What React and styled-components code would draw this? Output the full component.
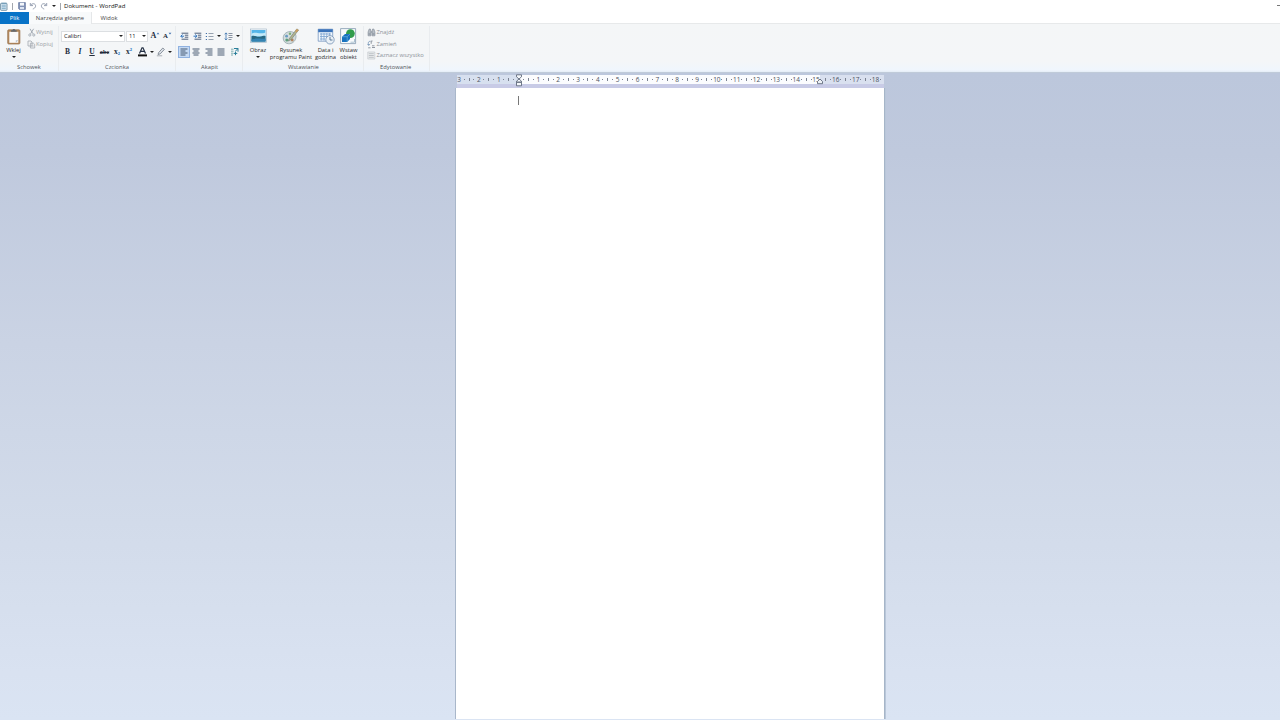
import React from "react";
import styled, { createGlobalStyle } from "styled-components";

const Global = createGlobalStyle`
  * { box-sizing: border-box; }
  body { margin: 0; overflow: hidden; background: #fff; }
`;

const Window = styled.div`
  width: 1280px;
  height: 720px;
  display: flex;
  flex-direction: column;
  overflow: hidden;
  font-family: "Open Sans", "Noto Sans", sans-serif;
  font-size: 5.8px;
  line-height: 7px;
  color: #2b2b2b;
  background: #fff;
`;

const TitleBar = styled.header`
  height: 12px;
  display: flex;
  align-items: center;
`;

const Slot = styled.span`
  width: ${(p) => p.$w}px;
  height: ${(p) => p.$h || 12}px;
  flex: none;
  display: flex;
  align-items: center;
  justify-content: center;
`;

const Text = styled.span`
  white-space: nowrap;
  font-size: ${(p) => p.$size || 5.8}px;
  letter-spacing: ${(p) => p.$track || 0}px;
  color: ${(p) => p.$color || "inherit"};
`;

const WindowTitle = styled(Text)`
  margin-left: 2px;
  color: #111;
`;

const Spacer = styled.span`
  flex: 1;
`;

const MinimizeMark = styled.i`
  width: 3px;
  height: 1px;
  margin-bottom: 1px;
  background: #777;
`;

const TabBar = styled.nav`
  height: 12px;
  display: flex;
  align-items: stretch;
  border-bottom: 1px solid #e7e9ea;
`;

const Tab = styled.div`
  width: ${(p) => p.$w}px;
  height: 12px;
  display: flex;
  align-items: center;
  justify-content: center;
  color: ${(p) => (p.$file ? "#fff" : "#444")};
  background: ${(p) => (p.$file ? "#0873c7" : p.$active ? "#f8fafb" : "transparent")};
  border-right: ${(p) => (p.$active ? "1px solid #e5e7e9" : "0")};
`;

const Ribbon = styled.section`
  height: 48px;
  display: flex;
  background: linear-gradient(#f4f6f7 0, #f4f6f8 38px, #f0f6fd 46px, #e4edf6 48px);
`;

const Group = styled.div`
  width: ${(p) => p.$w}px;
  height: 45px;
  margin-top: 2px;
  padding-left: ${(p) => p.$pad || 0}px;
  display: flex;
  flex-direction: column;
  border-right: 1px solid #e9ecef;
`;

const GroupBody = styled.div`
  height: 37.5px;
  display: flex;
`;

const GroupName = styled.div`
  height: 8px;
  padding-left: ${(p) => p.$x}px;
  display: flex;
  align-items: center;
  color: #505458;
`;

const Rows = styled.div`
  display: flex;
  flex-direction: column;
`;

const Row = styled.div`
  display: flex;
  align-items: center;
  height: ${(p) => p.$h}px;
`;

const BigButton = styled.div`
  width: ${(p) => p.$w}px;
  height: 37px;
  padding-top: 1.5px;
  display: flex;
  flex-direction: column;
  align-items: center;
  line-height: 7px;
`;

const BigIcon = styled.div`
  height: 19px;
  display: flex;
  align-items: flex-start;
`;

const BigLabel = styled(Text)`
  height: 7px;
`;

const Caret = styled.i`
  width: 0;
  height: 0;
  flex: none;
  margin: ${(p) => p.$m || "0"};
  border: 2px solid transparent;
  border-top: 2.4px solid #222;
  border-bottom: 0;
`;

const Combo = styled.div`
  width: ${(p) => p.$w}px;
  height: 11px;
  margin-right: 1px;
  padding: 0 1px 0 2px;
  display: flex;
  align-items: center;
  justify-content: space-between;
  background: #fff;
  border: 1px solid #dcdfe2;
  color: #222;
`;

const Glyph = styled.span`
  font-family: "Liberation Serif", serif;
  font-size: ${(p) => p.$size || 7.5}px;
  line-height: 8px;
  font-weight: bold;
  font-style: ${(p) => (p.$italic ? "italic" : "normal")};
  text-decoration: ${(p) => p.$deco || "none"};
  color: #222c3c;
`;

const Script = styled.span`
  font-size: 4px;
  line-height: 4px;
  color: #267ac4;
  font-weight: bold;
  transform: translateY(${(p) => p.$y}px);
`;

const Selected = styled(Slot)`
  background: #c5daf4;
  border: 1px solid #8fb1e0;
`;

const Workspace = styled.main`
  flex: 1;
  display: flex;
  flex-direction: column;
  align-items: flex-start;
  border-top: 1px solid #c0cbd9;
  background: linear-gradient(#bcc7dc 0, #bfc9dd 80px, #cad3e4 270px, #d2dbea 450px, #d9e2f1 600px, #dae4f3 100%);
`;

const Ruler = styled.div`
  width: 427px;
  height: 9px;
  margin: 1.5px 0 0 456.5px;
  display: flex;
  overflow: hidden;
  background: linear-gradient(90deg, #d7e0ef 62px, #fbfcfe 62px, #fbfcfe 363px, #d9e0ef 363px);
`;

const RulerTrack = styled.div`
  display: flex;
  flex: none;
  margin-left: -9.8px;
`;

const RulerCell = styled.div`
  width: 19.84px;
  height: 9px;
  flex: none;
  display: grid;
  grid-template-columns: repeat(4, 4.96px);
  align-items: center;
  justify-items: center;
  color: #4b5260;
`;

const Tick = styled.i`
  width: 1px;
  height: ${(p) => p.$h}px;
  background: #7b8291;
`;

const TitleDivider = styled(Tick)`
  background: #a3a7ad;
`;

const RulerMargin = styled.div`
  width: 427px;
  height: 4px;
  margin-left: 456.5px;
  background: #c8cbe6;
`;

const Page = styled.div`
  width: 427.3px;
  height: 631.5px;
  margin-left: 456.4px;
  padding: 8px 0 0 61px;
  background: #fff;
  box-shadow: -1px 0 0 #a9b7ca, 1px 0 0 #a6b5c8, 2px 0 0 #b9c7d9;
`;

const TextCursor = styled.div`
  width: 1px;
  height: 9px;
  margin-left: 0.8px;
  background: #777;
`;

const Marker = styled.svg`
  position: absolute;
  left: ${(p) => p.$x}px;
  top: ${(p) => p.$y}px;
`;

const Svg = ({ w, h, children }) => (
  <svg width={w} height={h} viewBox={`0 0 ${w} ${h}`} fill="none">{children}</svg>
);

const DocIcon = () => (
  <Svg w={8} h={9}>
    <rect x=".6" y="1.3" width="6.4" height="7" rx=".7" fill="#dcebf5" stroke="#5c7f96" strokeWidth=".8" />
    <path d="M1.5 1.2h5M1.8 3.2h4M1.8 4.8h4M1.8 6.4h4" stroke="#6097b8" strokeWidth=".7" />
  </Svg>
);
const SaveIcon = () => (
  <Svg w={8} h={8}>
    <path d="M.6.6h6.8v6.8H1.3l-.7-.7z" fill="#8292b6" stroke="#6577a0" strokeWidth=".7" />
    <path d="M2 .8h4v2.8H2z" fill="#f4f7fb" />
    <path d="M2 5h4v2.2H2z" fill="#dce4f1" />
  </Svg>
);
const UndoIcon = ({ flip }) => (
  <Svg w={8} h={8}>
    <g transform={flip ? "translate(8 0) scale(-1 1)" : undefined}>
      <path d="M1.3 1v2.6H4M1.5 3.3C3.3.8 6.8 1.4 6.6 4.2 6.4 5.7 5 6.7 3.8 7" stroke="#98a1b2" strokeWidth="1" />
    </g>
  </Svg>
);
const PasteIcon = () => (
  <Svg w={16} h={17}>
    <rect x="1.7" y="1.8" width="12.2" height="14.2" rx="1" fill="#b58a5e" stroke="#94704c" strokeWidth=".7" />
    <path d="M3.3 3.8h9v11h-9z" fill="#fafafa" />
    <path d="M5 3.8V2.2h1.5C6.5.5 9.2.5 9.2 2.2h1.5v1.6z" fill="#656a70" />
    <path d="M9.8 14.8v-2.6h2.5z" fill="#bac5cf" />
  </Svg>
);
const CutIcon = () => (
  <Svg w={8} h={9}>
    <path d="M2 .8l3 5M5.6.8l-3 5" stroke="#9ba3ad" strokeWidth=".9" />
    <circle cx="1.8" cy="7" r="1.1" stroke="#9ba3ad" strokeWidth=".8" />
    <circle cx="5.8" cy="7" r="1.1" stroke="#9ba3ad" strokeWidth=".8" />
  </Svg>
);
const CopyIcon = () => (
  <Svg w={9} h={9}>
    <path d="M1 1h3l1 1v4H1zM3.4 3.2h3l1.3 1.2V8H3.4z" fill="#f2f3f4" stroke="#a3a9b1" strokeWidth=".8" />
    <path d="M4.6 5.3h2M4.6 6.6h2" stroke="#b1b6bd" strokeWidth=".6" />
  </Svg>
);
const GrowMark = ({ down }) => (
  <Svg w={4} h={8}>
    <path d={down ? "M.6.8h2.8L2 2.4z" : "M.6 2.2h2.8L2 .6z"} fill="#3c6fae" />
  </Svg>
);
const HighlightIcon = () => (
  <Svg w={10} h={10}>
    <path d="M2.6 5.6L6.8 1l1.6 1.4-4.2 4.5-2.2.6z" fill="#dfe4ea" stroke="#727c89" strokeWidth=".8" />
    <path d="M.8 8.7h5.4" stroke="#c0c4c9" strokeWidth="1.4" />
  </Svg>
);
const IndentIcon = ({ right }) => (
  <Svg w={9} h={9}>
    <path d="M1.5 1.2h6.8M4.8 3.2h3.5M4.8 5.2h3.5M1.5 7.2h6.8" stroke="#4e5f79" strokeWidth="1" />
    <path d={right ? "M.5 4.2h3M2.2 2.5l1.8 1.7-1.8 1.7" : "M4 4.2H.8M2.5 2.5L.8 4.2l1.7 1.7"} stroke="#2d73bd" strokeWidth="1" />
  </Svg>
);
const ListIcon = () => (
  <Svg w={9} h={9}>
    <path d="M3.5 1.5h5M3.5 4.5h5M3.5 7.5h5" stroke="#8b97a6" strokeWidth=".9" />
    <path d="M.8 1.5H2M.8 4.5H2M.8 7.5H2" stroke="#3f6ea7" strokeWidth="1.2" />
  </Svg>
);
const SpacingIcon = () => (
  <Svg w={9} h={9}>
    <path d="M4.5 1.5h4M4.5 3.5h4M4.5 5.5h4M4.5 7.5h3" stroke="#7d8998" strokeWidth=".9" />
    <path d="M2 .9v7M.6 2.3L2 .9l1.4 1.4M.6 6.5L2 7.9l1.4-1.4" stroke="#356fac" strokeWidth=".8" />
  </Svg>
);
const AlignIcon = ({ d }) => (
  <Svg w={8} h={8}><path d={d} stroke="#485b73" strokeWidth="1.1" /></Svg>
);
const ParagraphIcon = () => (
  <Svg w={9} h={9}>
    <path d="M1 2.2h2.5M1 4.2h2.5M1 6.2h2M1 8h2" stroke="#6fa5a8" strokeWidth=".9" />
    <path d="M4 1.5h4v3.2M8 1.5L5.6 4M5.5 4.5v3.7M3.6 6.4h3.7" stroke="#297e99" strokeWidth="1" />
  </Svg>
);
const PictureIcon = () => (
  <Svg w={17} h={16}>
    <rect x=".5" y="1" width="16" height="13.5" fill="#f8fcff" stroke="#a8bac8" strokeWidth=".7" />
    <path d="M1.5 2h14v11.5h-14z" fill="#55b5e8" />
    <path d="M1.5 6c4-3 7 1 14-1.5v4h-14z" fill="#c3e9f8" />
    <path d="M1.5 8.2c3-1.5 4.5 1 8 .5s4-1.4 6-.7v5.5h-14z" fill="#276882" />
    <path d="M1.5 11.5c5-1.8 9-.2 14-1v3h-14z" fill="#3483b3" />
  </Svg>
);
const PaintIcon = () => (
  <Svg w={18} h={17}>
    <path d="M1.2 10c0-4.4 4.4-7 8.2-6.3 4.4.8 5.1 4 4.3 6.8-.7 2.8-3.7 5.6-7.3 5.2C3 15.4 1.2 13 1.2 10z" fill="#d3dcdd" stroke="#93a4a9" strokeWidth=".8" />
    <circle cx="4.6" cy="8.2" r="1.4" fill="#6a9cc2" /><circle cx="8" cy="5.8" r="1.2" fill="#7caf76" />
    <circle cx="4.8" cy="12" r="1.5" fill="#5f9f7c" /><circle cx="10.2" cy="12" r="1.4" fill="#b1825d" />
    <path d="M7 11L14.8.9l1.8 1.2-7.5 9.5L6.3 13z" fill="#b4b48e" stroke="#6f7d76" strokeWidth=".6" />
    <path d="M13 3.3L14.8.9l1.8 1.2-1.9 2.5z" fill="#cf9f60" />
  </Svg>
);
const DateIcon = () => (
  <Svg w={18} h={17}>
    <path d="M1.2 1.2h14.5v12H1.2z" fill="#f1f7fd" stroke="#668ab8" strokeWidth=".7" />
    <path d="M1.2 1.2h14.5v3H1.2z" fill="#3972b9" />
    <path d="M3 6h11M3 8.5h11M3 11h5M4.2 5v7.6M7 5v7.6M9.8 5v5M12.6 5v5" stroke="#7aa2d0" strokeWidth=".8" />
    <circle cx="13" cy="11.8" r="4.2" fill="#e9f0f6" stroke="#7390b4" strokeWidth=".8" />
    <path d="M13 9v3h2.5" stroke="#3d5f87" strokeWidth=".8" />
  </Svg>
);
const ObjectIcon = () => (
  <Svg w={17} h={17}>
    <path d="M.6.6h15v15H.6z" fill="#f7fafc" stroke="#8299ad" strokeWidth=".8" />
    <circle cx="10.4" cy="5.6" r="4.4" fill="#319c4c" />
    <path d="M2 8.7l3-2.8h5v5.1L7.2 14H2z" fill="#1772bf" />
    <path d="M2 8.7h5.2L10 5.9M7.2 8.7V14" stroke="#75b8e3" strokeWidth=".6" />
    <path d="M10.5 14.2h4V11" stroke="#9ab5c8" strokeWidth=".8" />
  </Svg>
);
const FindIcon = () => (
  <Svg w={9} h={9}>
    <path d="M1.1 7.8V4L2.2 1h1.2l.5 2.5v4.3zM5 7.8V3.5L5.6 1h1.2L7.9 4v3.8z" fill="#b6bdc5" stroke="#89929d" strokeWidth=".7" />
    <path d="M3.8 4h1.4M1.5 6h2M5.4 6h2" stroke="#747f8c" strokeWidth=".8" />
  </Svg>
);
const ReplaceIcon = () => (
  <Svg w={9} h={9}>
    <path d="M3.5 1.2C1.5 1 .8 2.8 1.6 5M.5 4l1.2 1.5L3 4" stroke="#7090b3" strokeWidth=".8" />
    <path d="M4.2 3.8V1h1.3M1.2 7.8h2.3M5 7.5h3M5 5.8h2.5" stroke="#848c97" strokeWidth=".9" />
  </Svg>
);
const SelectAllIcon = () => (
  <Svg w={9} h={9}>
    <path d="M.8 1h7v7h-7z" fill="#eceeef" stroke="#bbc0c5" strokeWidth=".6" />
    <path d="M1.8 2.7h5M1.8 4.5h5M1.8 6.3h5" stroke="#b0b5bb" strokeWidth=".8" />
  </Svg>
);

const alignments = [
  "M.5 1h7M.5 3h5M.5 5h7M.5 7h5",
  "M.5 1h7M1.5 3h5M.5 5h7M1.5 7h5",
  "M.5 1h7M2.5 3h5M.5 5h7M2.5 7h5",
  "M.5 1h7M.5 3h7M.5 5h7M.5 7h7",
];
const centimetres = Array.from({ length: 22 }, (_, i) => i - 3);

export default function App() {
  return (
    <>
      <Global />
      <Window>
        <TitleBar>
          <Slot $w={8}><DocIcon /></Slot>
          <Slot $w={8}><TitleDivider $h={7} /></Slot>
          <Slot $w={11}><SaveIcon /></Slot>
          <Slot $w={12}><UndoIcon /></Slot>
          <Slot $w={10}><UndoIcon flip /></Slot>
          <Slot $w={10}><Caret /></Slot>
          <Slot $w={3}><TitleDivider $h={7} /></Slot>
          <WindowTitle $size={6} $track={0.05}>Dokument - WordPad</WindowTitle>
          <Spacer />
          <MinimizeMark />
        </TitleBar>
        <TabBar>
          <Tab $w={29} $file><Text>Plik</Text></Tab>
          <Tab $w={63} $active><Text $track={0.03}>Narzędzia główne</Text></Tab>
          <Tab $w={34}><Text>Widok</Text></Tab>
        </TabBar>
        <Ribbon>
          <Group $w={59}>
            <GroupBody>
              <BigButton $w={27}>
                <BigIcon><PasteIcon /></BigIcon>
                <BigLabel>Wklej</BigLabel>
                <Caret $m="2px 0 0" />
              </BigButton>
              <Rows>
                <Row $h={12}><Slot $w={9}><CutIcon /></Slot><Text $color="#999fa6">Wytnij</Text></Row>
                <Row $h={12}><Slot $w={9}><CopyIcon /></Slot><Text $color="#999fa6">Kopiuj</Text></Row>
              </Rows>
            </GroupBody>
            <GroupName $x={17}><Text>Schowek</Text></GroupName>
          </Group>
          <Group $w={117} $pad={2}>
            <GroupBody>
              <Rows>
                <Row $h={20}>
                  <Combo $w={64}><Text>Calibri</Text><Caret /></Combo>
                  <Combo $w={22}><Text>11</Text><Caret /></Combo>
                  <Slot $w={13}><Glyph $size={8}>A</Glyph><GrowMark /></Slot>
                  <Slot $w={11}><Glyph $size={6.8}>A</Glyph><GrowMark down /></Slot>
                </Row>
                <Row $h={11}>
                  <Slot $w={13}><Glyph>B</Glyph></Slot>
                  <Slot $w={12}><Glyph $italic>I</Glyph></Slot>
                  <Slot $w={12}><Glyph $deco="underline">U</Glyph></Slot>
                  <Slot $w={13}><Glyph $size={6.2} $deco="line-through">abc</Glyph></Slot>
                  <Slot $w={12}><Glyph>x</Glyph><Script $y={2}>2</Script></Slot>
                  <Slot $w={12}><Glyph>x</Glyph><Script $y={-2}>2</Script></Slot>
                  <Slot $w={15}>
                    <Svg w={9} h={10}>
                      <path d="M1.5 6.4L4 .8h1l2.5 5.6M2.6 4.4h3.7" stroke="#243044" strokeWidth="1.2" />
                      <path d="M0 8.4h9" stroke="#111" strokeWidth="2" />
                    </Svg>
                  </Slot>
                  <Caret />
                  <Slot $w={14}><HighlightIcon /></Slot>
                  <Caret />
                </Row>
              </Rows>
            </GroupBody>
            <GroupName $x={44}><Text>Czcionka</Text></GroupName>
          </Group>
          <Group $w={67} $pad={2}>
            <GroupBody>
              <Rows>
                <Row $h={20}>
                  <Slot $w={13}><IndentIcon /></Slot>
                  <Slot $w={12}><IndentIcon right /></Slot>
                  <Slot $w={13.5}><ListIcon /></Slot>
                  <Caret />
                  <Slot $w={15}><SpacingIcon /></Slot>
                  <Caret />
                </Row>
                <Row $h={11}>
                  {alignments.map((d, i) => i === 0
                    ? <Selected key={d} $w={12}><AlignIcon d={d} /></Selected>
                    : <Slot key={d} $w={12.5}><AlignIcon d={d} /></Slot>)}
                  <Slot $w={13}><ParagraphIcon /></Slot>
                </Row>
              </Rows>
            </GroupBody>
            <GroupName $x={23}><Text>Akapit</Text></GroupName>
          </Group>
          <Group $w={121} $pad={3}>
            <GroupBody>
              <BigButton $w={24}>
                <BigIcon><PictureIcon /></BigIcon>
                <BigLabel>Obraz</BigLabel><Caret $m="2px 0 0" />
              </BigButton>
              <BigButton $w={42}>
                <BigIcon><PaintIcon /></BigIcon>
                <BigLabel>Rysunek</BigLabel><BigLabel>programu Paint</BigLabel>
              </BigButton>
              <BigButton $w={27}>
                <BigIcon><DateIcon /></BigIcon>
                <BigLabel>Data i</BigLabel><BigLabel>godzina</BigLabel>
              </BigButton>
              <BigButton $w={19}>
                <BigIcon><ObjectIcon /></BigIcon>
                <BigLabel>Wstaw</BigLabel><BigLabel>obiekt</BigLabel>
              </BigButton>
            </GroupBody>
            <GroupName $x={42}><Text>Wstawianie</Text></GroupName>
          </Group>
          <Group $w={66} $pad={2.5}>
            <GroupBody>
              <Rows>
                <Row $h={12}><Slot $w={10}><FindIcon /></Slot><Text $color="#8c9299">Znajdź</Text></Row>
                <Row $h={12}><Slot $w={10}><ReplaceIcon /></Slot><Text $color="#8c9299">Zamień</Text></Row>
                <Row $h={11}><Slot $w={10}><SelectAllIcon /></Slot><Text $color="#8c9299">Zaznacz wszystko</Text></Row>
              </Rows>
            </GroupBody>
            <GroupName $x={13.5}><Text>Edytowanie</Text></GroupName>
          </Group>
        </Ribbon>
        <Workspace>
          <Ruler>
            <RulerTrack>
              {centimetres.map((n) => (
                <RulerCell key={n}>
                  <Tick $h={3} />
                  <Tick $h={1} />
                  <Text $size={6.5}>{n === 0 ? "" : Math.abs(n)}</Text>
                  <Tick $h={1} />
                </RulerCell>
              ))}
            </RulerTrack>
          </Ruler>
          <RulerMargin />
          <Page><TextCursor /></Page>
        </Workspace>
        <Marker $x={515} $y={74} width="8" height="13" viewBox="0 0 8 13" fill="#f5f8fb" stroke="#606a7c" strokeWidth=".9">
          <path d="M1.5.8h5v2L4 5 1.5 2.8zM4 5l2.5 2.2v1h-5v-1zM1.5 8.2h5v3.6h-5z" />
        </Marker>
        <Marker $x={816} $y={77.5} width="8" height="7" viewBox="0 0 8 7" fill="#edf1f6" stroke="#606a7c" strokeWidth=".9">
          <path d="M4 1l2.5 2.5v2.2h-5V3.5z" />
        </Marker>
      </Window>
    </>
  );
}
